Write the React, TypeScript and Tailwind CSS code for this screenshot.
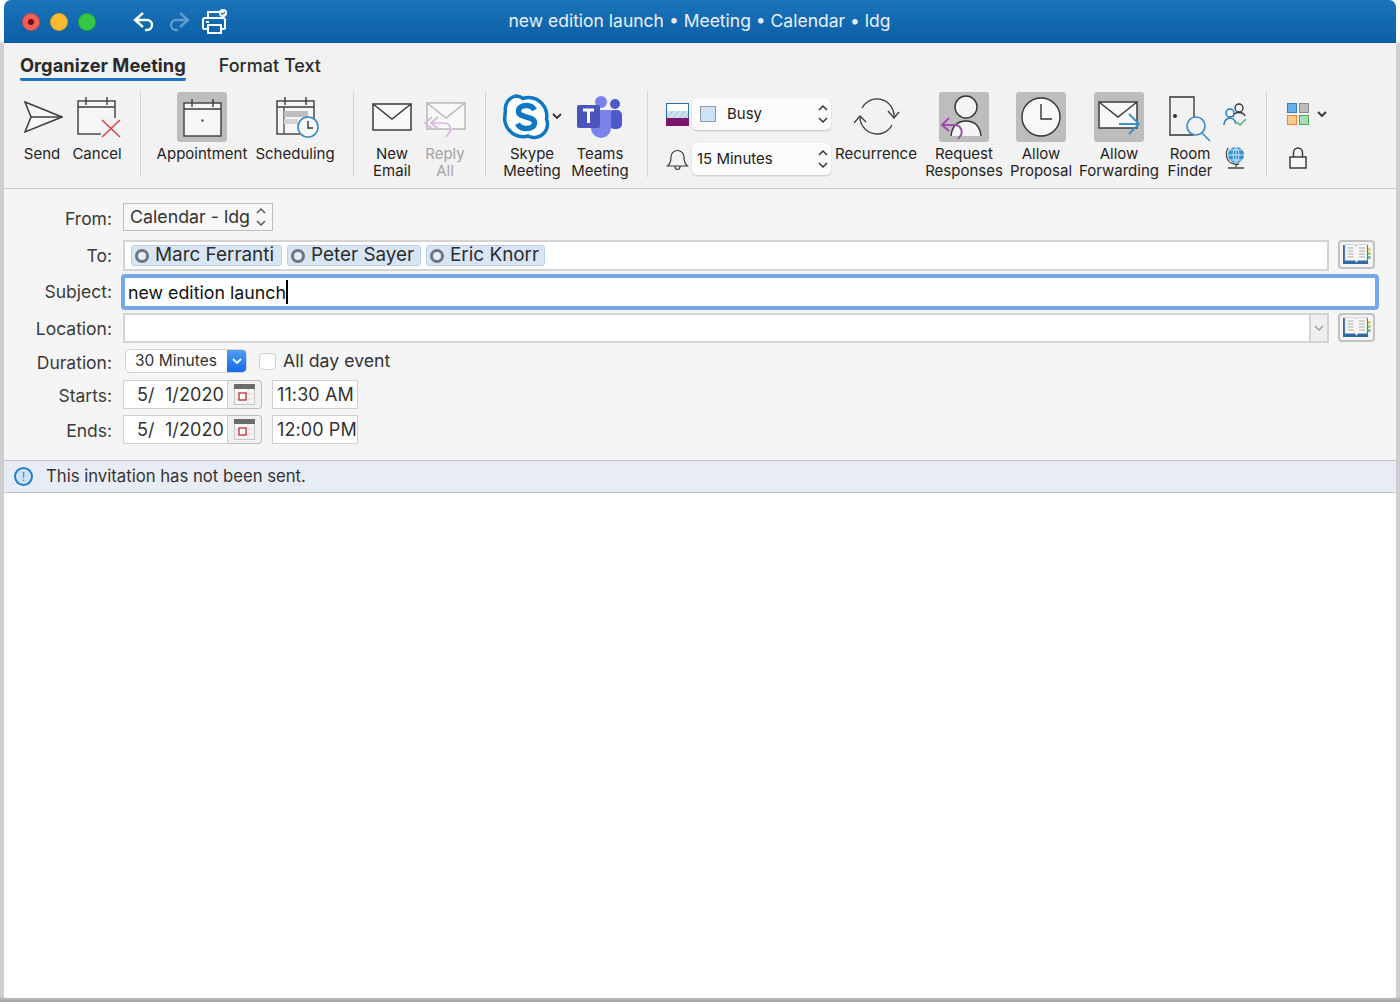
import type { ReactNode } from "react"

const Tool = ({ w, ml, label, dim, children }: { w: string; ml?: string; label: ReactNode; dim?: boolean; children: ReactNode }) => (
  <div className={`flex flex-col items-center shrink-0 ${w} ${ml ?? ""}`}>
    <div className="h-[50px] flex items-center justify-center">{children}</div>
    <div className={`mt-[3px] text-center text-[15px] leading-[17px] whitespace-nowrap ${dim ? "text-[#a3a3a3]" : "text-[#1f1f1f]"}`}>{label}</div>
  </div>
)

const Sep = ({ ml }: { ml: string }) => <div className={`w-px h-[86px] mt-[-1px] bg-[#d4d4d4] shrink-0 ${ml}`} />

const Calendar = ({ dot }: { dot?: boolean }) => (
  <g fill="none" stroke="#3c3c3c" strokeWidth="1.4">
    <rect x="1" y="5" width="37" height="33" fill="#f6f6f6" />
    <path d="M1 11h37M9 1v8M30 1v8" />
    {dot && <rect x="18.5" y="21.5" width="2" height="2" fill="#333" stroke="none" />}
  </g>
)

const Envelope = ({ color = "#3c3c3c" }: { color?: string }) => (
  <g fill="#f8f8f8" stroke={color} strokeWidth="1.5">
    <rect x="1" y="1" width="38" height="26" />
    <path d="M1 1l19 15L39 1" fill="none" />
  </g>
)

const UpDown = ({ stroke = "#333" }: { stroke?: string }) => (
  <svg width="10" height="22" viewBox="0 0 10 22" fill="none" stroke={stroke} strokeWidth="1.5">
    <path d="M1 7l4-4 4 4M1 15l4 4 4-4" />
  </svg>
)

const Chevron = () => (
  <svg width="10" height="7" viewBox="0 0 10 7" fill="none" stroke="#333" strokeWidth="1.8">
    <path d="M1 1l4 4 4-4" />
  </svg>
)

const AddressBook = () => (
  <div className="w-[37px] h-[29px] ml-[9px] self-start shrink-0 rounded-[4px] border-2 border-[#c2c2c2] bg-[#f3f3f3] flex items-center justify-center">
    <svg width="28" height="21" viewBox="0 0 28 21">
      <rect x="0" y="1" width="25" height="19" fill="#2f6aa8" />
      <rect x="25" y="4" width="2.5" height="3" fill="#e4c95a" />
      <rect x="25" y="8" width="2.5" height="3" fill="#a8c86a" />
      <rect x="25" y="12" width="2.5" height="3" fill="#7bb6a0" />
      <path d="M2 0.5h10l1.5 1.5 1.5-1.5h9v16h-9l-1.5 2-1.5-2H2z" fill="#f7f7f7" stroke="#b5b5b5" strokeWidth="0.5" />
      <path d="M4.5 4h6M4.5 7h6M4.5 10h6M4.5 13h6M16 4h6M16 7h6M16 10h6M16 13h6" stroke="#9a9a9a" strokeWidth="0.8" />
    </svg>
  </div>
)

const Chip = ({ name, w }: { name: string; w: string }) => (
  <div className={`h-[21px] ${w} rounded-[3px] border border-[#bcd0ea] bg-[#d8e5f5] flex items-center pl-[3px] text-[18.9px] leading-none text-[#2b2b2b] whitespace-nowrap`}>
    <span className="w-[14px] h-[14px] rounded-full border-[3px] border-[#6f7680] bg-[#e8eef6] mr-[6px] shrink-0" />
    {name}
  </div>
)

const FormRow = ({ label, h, mt, lo, children }: { label: string; h: string; mt: string; lo?: string; children: ReactNode }) => (
  <div className={`flex items-center ${h} ${mt}`}>
    <div className={`w-[108px] text-right text-[17.5px] text-[#3a3a3a] shrink-0 leading-none ${lo ?? "pt-[2px]"}`}>{label}</div>
    <div className="ml-[11px] flex items-center flex-1 h-full">{children}</div>
  </div>
)

const DateRow = ({ label, mt, time }: { label: string; mt: string; time: string }) => (
  <FormRow label={label} h="h-[29px]" mt={mt}>
    <div className="w-[105px] h-full bg-white border border-[#cfcfcf] flex items-center pl-[13px] text-[18px] tracking-[0.1px] text-[#333] whitespace-pre">5/  1/2020</div>
    <div className="w-[34px] h-full bg-[#f0f0f0] border border-l-0 border-[#bdbdbd] rounded-r-[4px] flex items-center justify-center">
      <svg width="21" height="21" viewBox="0 0 21 21">
        <rect x="0.5" y="0.5" width="20" height="20" fill="#f5f5f5" stroke="#c4c4c4" />
        <rect x="0" y="0" width="21" height="5" fill="#6b6b6b" />
        <path d="M14 5v16M0 10h21M0 15h21" stroke="#dcdcdc" />
        <rect x="5" y="9" width="7" height="7" fill="#fff" stroke="#c23b3b" strokeWidth="1.4" />
      </svg>
    </div>
    <div className="ml-[10px] w-[86px] h-full bg-white border border-[#cfcfcf] flex items-center pl-[4px] text-[18px] tracking-[0.1px] text-[#333] whitespace-nowrap">{time}</div>
  </FormRow>
)

export default function App() {
  return (
    <div className="h-[1002px] px-[4px] pb-[4px] bg-[linear-gradient(to_bottom,#ffffff_40px,#cfcfcf_44px,#cfcfcf_996px,#9a9a9a)] font-['Inter','Liberation_Sans',sans-serif]">
      <div className="h-[998px] flex flex-col rounded-t-[7px] overflow-hidden bg-white">
        {/* title bar */}
        <div className="h-[43px] shrink-0 relative flex items-center bg-gradient-to-b from-[#1a74ba] to-[#0b5ea6]">
          <div className="ml-[18px] flex items-center gap-[10px]">
            <div className="w-[18px] h-[18px] rounded-full bg-[#f2605a] border border-[#d8443f] flex items-center justify-center">
              <div className="w-[6px] h-[6px] rounded-full bg-[#6b0f0b]" />
            </div>
            <div className="w-[18px] h-[18px] rounded-full bg-[#fbbb30] border border-[#dd9f22]" />
            <div className="w-[18px] h-[18px] rounded-full bg-[#35c748] border border-[#25a838]" />
          </div>
          <svg className="ml-[37px]" width="24" height="22" viewBox="0 0 24 22" fill="none" stroke="#fff" strokeWidth="2.4">
            <path d="M10 2L2 9l8 7M2 9h12a5 5 0 0 1 0 10h-2" />
          </svg>
          <svg className="ml-[9px]" width="24" height="22" viewBox="0 0 24 22" fill="none" stroke="#5c9ccf" strokeWidth="2.4">
            <path d="M14 2l8 7-8 7M22 9H10a5 5 0 0 0 0 10h2" />
          </svg>
          <svg className="ml-[12px]" width="26" height="26" viewBox="0 0 26 26" fill="none" stroke="#fff" strokeWidth="2">
            <path d="M6 9V3h11M6 20H2.500a1.500 1.500 0 0 1-1.500-1.500V11a2 2 0 0 1 2-2h18a2 2 0 0 1 2 2v7.500a1.500 1.500 0 0 1-1.500 1.500H19" />
            <rect x="6" y="16" width="13" height="8" />
            <path d="M4 13h3" />
            <circle cx="21" cy="4" r="4" fill="#fff" stroke="none" />
            <path d="M19 4l1.500 1.500L23 3" stroke="#1a74ba" strokeWidth="1.200" />
          </svg>
          <div className="absolute inset-0 flex items-center justify-center text-[17.5px] text-[#e8f1f9] pr-[1px]">new edition launch • Meeting • Calendar • ldg</div>
        </div>

        {/* tabs + ribbon */}
        <div className="h-[146px] shrink-0 bg-[#f2f2f2] border-b border-[#c9c9c9]">
          <div className="h-[49px] flex items-start pl-[16px] pt-[11px] text-[18.3px] leading-[23px] text-[#2a2a2a]">
            <div className="font-bold border-b-[3px] border-[#1a73c9] h-[27px] rounded-b-[2px] whitespace-nowrap">Organizer Meeting</div>
            <div className="ml-[33px] font-medium text-[18px] whitespace-nowrap">Format Text</div>
          </div>
          <div className="flex pl-[12px]">
            <Tool w="w-[52px]" label="Send">
              <svg className="ml-[2px]" width="40" height="34" viewBox="0 0 40 34" fill="#f7f7f7" stroke="#3c3c3c" strokeWidth="1.500">
                <path d="M2 2l37 15L2 32l6-15z" />
                <path d="M8 17h31" fill="none" />
              </svg>
            </Tool>
            <Tool w="w-[58px]" label="Cancel">
              <svg className="ml-[4px]" width="44" height="42" viewBox="0 0 44 42">
                <Calendar />
                <rect x="24" y="22" width="20" height="20" fill="#f2f2f2" />
                <path d="M25 24l18 17M43 24L25 41" stroke="#d6424a" strokeWidth="1.500" fill="none" />
              </svg>
            </Tool>
            <Sep ml="ml-[14px]" />
            <Tool w="w-[92px]" ml="ml-[15px]" label="Appointment">
              <div className="w-[50px] h-[50px] rounded-[3px] bg-[#bdbdbd] flex items-center justify-center">
                <svg width="39" height="39" viewBox="0 0 39 39"><Calendar dot /></svg>
              </div>
            </Tool>
            <Tool w="w-[86px]" ml="ml-[4px]" label="Scheduling">
              <svg className="ml-[6px]" width="44" height="42" viewBox="0 0 44 42">
                <Calendar />
                <path d="M8 11v27" stroke="#3c3c3c" strokeWidth="1.200" />
                <rect x="8" y="15" width="24" height="6" fill="#bdbdbd" />
                <rect x="8" y="23" width="14" height="5" fill="#d4d4d4" />
                <circle cx="32" cy="31" r="10" fill="#f8f8f8" stroke="#3a8cc4" strokeWidth="1.600" />
                <path d="M32 25v7h5" fill="none" stroke="#333" strokeWidth="1.400" />
              </svg>
            </Tool>
            <Sep ml="ml-[15px]" />
            <Tool w="w-[50px]" ml="ml-[13px]" label={<>New<br />Email</>}>
              <svg width="40" height="28" viewBox="0 0 40 28"><Envelope /></svg>
            </Tool>
            <Tool w="w-[50px]" ml="ml-[3px]" dim label={<>Reply<br />All</>}>
              <svg className="mt-[8px]" width="42" height="38" viewBox="0 0 42 38" fill="none">
                <g transform="translate(2 0)"><Envelope color="#b9b9b9" /></g>
                <path d="M8 15l-7 6 7 6M14 15l-7 6 7 6M7 21h14a6 6 0 0 1 4 10l-3 4" stroke="#d8b8e0" strokeWidth="1.700" />
              </svg>
            </Tool>
            <Sep ml="ml-[15px]" />
            <Tool w="w-[62px]" ml="ml-[15px]" label={<>Skype<br />Meeting</>}>
              <svg width="62" height="48" viewBox="0 0 62 48">
                <path d="M15 3a12 12 0 0 1 7 2.500c2-.7 3.500-1 5.500-1A18.500 18.500 0 0 1 45.500 26c.7 1.800 1 3 1 5A13.500 13.500 0 0 1 33 44.500c-2.500 0-4.500-.7-6-1.500-1.500.5-3 .7-4.500.7A18.500 18.500 0 0 1 4 22c0-1.500.2-3 .5-4A13 13 0 0 1 15 3z" fill="#fff" stroke="#0f78c4" strokeWidth="3.500" />
                <path d="M33.500 17c-1.500-3-4-4.500-8-4.500-4.500 0-8 2-8 5.800 0 7.500 16 4 16 11.500 0 3.500-3.200 5.800-8 5.800-4.200 0-7.300-1.500-9-4.800" fill="none" stroke="#0f78c4" strokeWidth="5.500" />
                <path d="M52 21l4 4 4-4" fill="none" stroke="#333" strokeWidth="1.800" />
              </svg>
            </Tool>
            <Tool w="w-[62px]" ml="ml-[6px]" label={<>Teams<br />Meeting</>}>
              <svg width="46" height="42" viewBox="0 0 46 42">
                <circle cx="38" cy="8" r="5" fill="#5059c9" />
                <rect x="32" y="14" width="13" height="19" rx="5" fill="#5059c9" />
                <circle cx="24" cy="6" r="6" fill="#7b83eb" />
                <path d="M14 14h20v18a10 10 0 0 1-20 0z" fill="#7b83eb" />
                <rect x="0" y="9" width="23" height="23" rx="2" fill="#4b53bc" />
                <path d="M6 14h11M11.500 14v13" stroke="#fff" strokeWidth="3" fill="none" />
              </svg>
            </Tool>
            <Sep ml="ml-[16px]" />
            <div className="ml-[18px] w-[165px] shrink-0 flex flex-col gap-[13px] pt-[6px]">
              <div className="flex items-center h-[32px]">
                <svg className="shrink-0" width="23" height="23" viewBox="0 0 23 23">
                  <rect x="0.500" y="0.500" width="22" height="22" fill="#fff" stroke="#2c6ca8" />
                  <rect x="1" y="8" width="21" height="7" fill="#cfe0ef" />
                  <path d="M1 15l6-7M7 15l6-7M13 15l6-7M19 15l3-3.500" stroke="#9fbfdc" strokeWidth="1" fill="none" />
                  <rect x="0" y="15" width="23" height="8" fill="#7a1670" />
                </svg>
                <div className="ml-[3px] flex-1 h-full rounded-[5px] bg-[#fbfbfb] shadow-[0_1px_2px_rgba(0,0,0,0.2)] flex items-center pl-[8px] pr-[3px] text-[15px] text-[#222]">
                  <span className="w-[16px] h-[16px] bg-[#cde3f5] border border-[#8f9aa5]" />
                  <span className="ml-[11px] flex-1">Busy</span>
                  <UpDown />
                </div>
              </div>
              <div className="flex items-center h-[32px]">
                <svg className="shrink-0" width="23" height="24" viewBox="0 0 23 24" fill="none" stroke="#3c3c3c" strokeWidth="1.200">
                  <path d="M1.500 19c2.500-2 3.500-4 3.500-9a6.500 6.500 0 0 1 13 0c0 5 1 7 3.500 9zM9 19.500c0 4 5 4 5 0" />
                </svg>
                <div className="ml-[3px] flex-1 h-full rounded-[5px] bg-[#fbfbfb] shadow-[0_1px_2px_rgba(0,0,0,0.2)] flex items-center pl-[5px] pr-[3px] text-[15px] text-[#222]">
                  <span className="flex-1">15 Minutes</span>
                  <UpDown />
                </div>
              </div>
            </div>
            <Tool w="w-[84px]" ml="ml-[3px]" label="Recurrence">
              <svg className="ml-[1px]" width="46" height="40" viewBox="0 0 46 40" fill="none" stroke="#3c3c3c" strokeWidth="1.300">
                <path d="M8 11A17 17 0 0 1 40 20M38 28A17 17 0 0 1 6 20" />
                <path d="M34 14l6 7 5-6M0 26l6-7 6 6" />
              </svg>
            </Tool>
            <Tool w="w-[80px]" ml="ml-[6px]" label={<>Request<br />Responses</>}>
              <div className="w-[50px] h-[50px] rounded-[3px] bg-[#bdbdbd]">
                <svg width="50" height="50" viewBox="0 0 50 50" fill="none">
                  <circle cx="27" cy="15" r="11" fill="#f5f5f5" stroke="#333" strokeWidth="1.400" />
                  <path d="M12 44c1-10 7-15 15-15s14 5 15 15z" fill="#f5f5f5" />
                  <path d="M42 44c-1-9-6-15-15-15s-14 6-15 15" stroke="#333" strokeWidth="1.400" />
                  <path d="M10 26l-7 7 7 6M3 33h14a7 7 0 0 1 5 10l-3 4" stroke="#a04fb0" strokeWidth="2" />
                </svg>
              </div>
            </Tool>
            <Tool w="w-[66px]" ml="ml-[4px]" label={<>Allow<br />Proposal</>}>
              <div className="w-[50px] h-[50px] rounded-[3px] bg-[#bdbdbd] flex items-center justify-center">
                <svg width="40" height="40" viewBox="0 0 40 40" fill="#f8f8f8" stroke="#333" strokeWidth="1.400">
                  <circle cx="20" cy="20" r="19" />
                  <path d="M20 7v15h11" fill="none" />
                </svg>
              </div>
            </Tool>
            <Tool w="w-[82px]" ml="ml-[4px]" label={<>Allow<br />Forwarding</>}>
              <div className="w-[50px] h-[50px] rounded-[3px] bg-[#bdbdbd] flex items-center justify-center">
                <svg width="44" height="40" viewBox="0 0 44 40" fill="none">
                  <g transform="translate(1 4)"><Envelope /></g>
                  <path d="M22 27h20M32 17l10 10-10 10" stroke="#3d8fc6" strokeWidth="1.800" />
                </svg>
              </div>
            </Tool>
            <Tool w="w-[50px]" ml="ml-[5px]" label={<>Room<br />Finder</>}>
              <svg className="mt-[3px]" width="44" height="46" viewBox="0 0 44 46" fill="none">
                <path d="M26 26V1H2v38h24" stroke="#333" strokeWidth="1.300" />
                <circle cx="7" cy="20" r="2" fill="#333" />
                <circle cx="28" cy="30" r="9" fill="#f2f2f2" stroke="#3d8fc6" strokeWidth="1.700" />
                <path d="M34 37l8 8" stroke="#3d8fc6" strokeWidth="1.700" />
              </svg>
            </Tool>
            <div className="ml-[5px] w-[30px] shrink-0 flex flex-col items-center pt-[10px]">
              <svg width="24" height="24" viewBox="0 0 24 24" fill="none">
                <circle cx="16" cy="6" r="4" stroke="#333" strokeWidth="1.300" />
                <path d="M10 15c0-3 3-4.500 6-4.500s5 1 6 3.500" stroke="#333" strokeWidth="1.300" />
                <circle cx="7" cy="11" r="4" fill="#f2f2f2" stroke="#1d78c1" strokeWidth="1.500" />
                <path d="M1 23c0-4 2.500-7 6-7s5 2 6 6" stroke="#1d78c1" strokeWidth="1.500" />
                <path d="M14 20l3 3 6-6" stroke="#57b06e" strokeWidth="1.500" />
              </svg>
              <svg className="mt-[20px] ml-[1px]" width="22" height="24" viewBox="0 0 22 24" fill="none">
                <circle cx="11" cy="9" r="8" fill="#2f93d2" />
                <path d="M3 9h16M11 1v16M5 4h12M5 14h12" stroke="#cfe6f5" strokeWidth="1" />
                <path d="M11 1c-4 4-4 12 0 16M11 1c4 4 4 12 0 16" stroke="#cfe6f5" strokeWidth="1" />
                <path d="M3 2c-3 5-2 12 3 15 2 1 5 1.500 8 1M11 18v3M3 22h16" stroke="#444" strokeWidth="1.300" />
              </svg>
            </div>
            <Sep ml="ml-[16px]" />
            <div className="ml-[20px] w-[43px] shrink-0 flex flex-col items-start pt-[11px]">
              <div className="flex items-center">
                <div className="grid grid-cols-2 gap-[2px] w-[22px]">
                  <span className="h-[10px] bg-[#6bb0e6] border border-[#2f7fc0]" />
                  <span className="h-[10px] bg-[#bdbdbd] border border-[#8a8a8a]" />
                  <span className="h-[10px] bg-[#f7c98a] border border-[#e28a3a]" />
                  <span className="h-[10px] bg-[#a9dcb0] border border-[#4aa45c]" />
                </div>
                <span className="ml-[8px]"><Chevron /></span>
              </div>
              <svg className="mt-[22px] ml-[2px]" width="18" height="22" viewBox="0 0 18 22" fill="none" stroke="#333" strokeWidth="1.400">
                <rect x="1" y="10" width="16" height="11" fill="#f8f8f8" />
                <path d="M4.500 10V5.500a4.500 4.500 0 0 1 9 0V10" />
              </svg>
            </div>
          </div>
        </div>

        {/* form */}
        <div className="h-[271px] shrink-0 bg-[#f5f5f5] pt-[14px] pr-[21px]">
          <FormRow label="From:" h="h-[28px]" mt="mt-0" lo="pt-[4px]">
            <div className="w-[150px] h-full bg-[#f7f7f7] border border-[#bdbdbd] flex items-center justify-between pl-[6px] pr-[6px] text-[17.8px] text-[#333] whitespace-nowrap">
              Calendar - ldg
              <UpDown stroke="#555" />
            </div>
          </FormRow>
          <FormRow label="To:" h="h-[31px]" mt="mt-[9px]" lo="pt-0">
            <div className="flex-1 h-full bg-white border-2 border-[#d4d4d4] flex items-center gap-[5px] pl-[6px]">
              <Chip name="Marc Ferranti" w="w-[151px]" />
              <Chip name="Peter Sayer" w="w-[134px]" />
              <Chip name="Eric Knorr" w="w-[119px]" />
            </div>
            <AddressBook />
          </FormRow>
          <FormRow label="Subject:" h="h-[36px]" mt="mt-[3px]" lo="pt-0">
            <div className="flex-1 h-full ml-[-2px] mr-[-4px] bg-white border-[4px] border-[#76a8e8] rounded-[4px] flex items-center pl-[3px] pt-[3px] text-[17.8px] text-[#111] whitespace-nowrap">
              new edition launch
              <span className="w-[2px] h-[24px] mt-[-3px] bg-black" />
            </div>
          </FormRow>
          <FormRow label="Location:" h="h-[30px]" mt="mt-[3px]">
            <div className="flex-1 h-full bg-white border-2 border-[#d4d4d4] flex justify-end">
              <div className="w-[18px] bg-[#efefef] border-l-2 border-[#d4d4d4] flex items-center justify-center">
                <svg width="10" height="6" viewBox="0 0 10 6" fill="none" stroke="#a0a0a0" strokeWidth="1.500"><path d="M1 1l4 4 4-4" /></svg>
              </div>
            </div>
            <AddressBook />
          </FormRow>
          <FormRow label="Duration:" h="h-[24px]" mt="mt-[6px]" lo="pt-[4px]">
            <div className="ml-[2px] w-[122px] h-full rounded-[5px] bg-white border border-[#d2d2d2] flex items-center pl-[9px] text-[15.500px] text-[#333] relative overflow-hidden whitespace-nowrap">
              30 Minutes
              <div className="absolute right-0 top-0 bottom-0 w-[19px] bg-gradient-to-b from-[#4f9df5] to-[#1468e6] flex items-center justify-center">
                <svg width="10" height="7" viewBox="0 0 10 7" fill="none" stroke="#fff" strokeWidth="1.800"><path d="M1 1l4 4 4-4" /></svg>
              </div>
            </div>
            <div className="ml-[12px] w-[17px] h-[17px] rounded-[4px] bg-white border border-[#cfcfcf]" />
            <div className="ml-[7px] text-[17.7px] text-[#333] whitespace-nowrap">All day event</div>
          </FormRow>
          <DateRow label="Starts:" mt="mt-[7px]" time="11:30 AM" />
          <DateRow label="Ends:" mt="mt-[6px]" time="12:00 PM" />
        </div>

        {/* info bar */}
        <div className="h-[33px] shrink-0 bg-[#e8edf5] border-y border-[#c2c2c2] flex items-center pl-[10px] text-[16.700px] text-[#333]">
          <span className="w-[19px] h-[19px] rounded-full border-2 border-[#1f7fd0] bg-[#cfe3f6] flex items-center justify-center text-[12px] leading-none text-[#1f7fd0]">!</span>
          <span className="ml-[13px]">This invitation has not been sent.</span>
        </div>

        <div className="flex-1 bg-white" />
      </div>
    </div>
  )
}
